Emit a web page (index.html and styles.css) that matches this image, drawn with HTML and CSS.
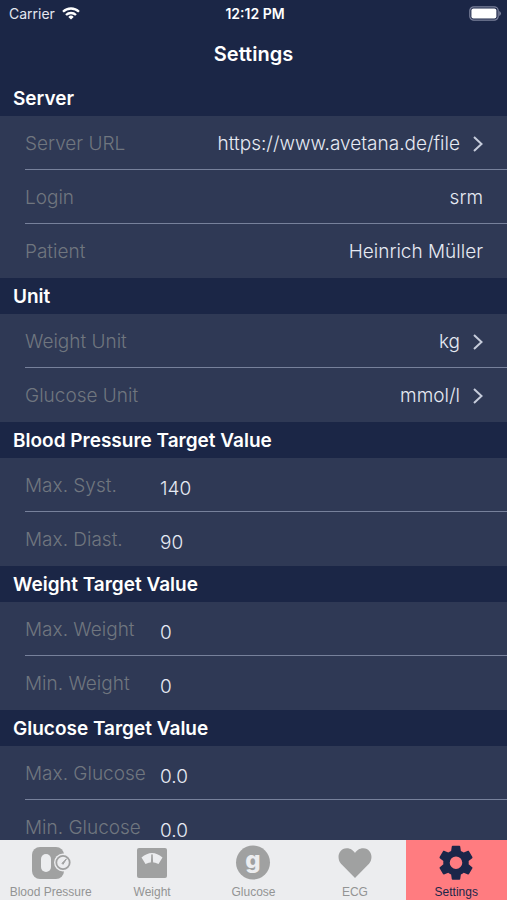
FILE: index.html
```html
<!DOCTYPE html>
<html lang="en">
<head>
<meta charset="utf-8">
<meta name="viewport" content="width=device-width, initial-scale=1">
<title>Settings</title>
<link rel="stylesheet" href="styles.css">
</head>
<body>
<div class="status">
  <div class="carrier">Carrier
    <svg width="18" height="13" viewBox="0 0 18 13" aria-hidden="true"><g fill="none" stroke="currentColor" stroke-width="2.3"><path d="M1 4.8a11.4 11.4 0 0 1 16 0"/><path d="M4 8a7.2 7.2 0 0 1 10 0"/></g><path d="M6.3 9.9a3.9 3.9 0 0 1 5.4 0L9 12.6z" fill="currentColor"/></svg>
  </div>
  <div class="clock">12:12 PM</div>
  <svg class="battery" width="32" height="15" viewBox="0 0 32 15" aria-hidden="true"><rect x=".8" y=".8" width="28.4" height="13.4" rx="4" fill="none" stroke="#7c829c" stroke-width="1.2"/><rect x="2.4" y="2.6" width="25" height="9.8" rx="2" fill="#fff"/><path d="M30.3 5v5q1.5-.8 1.5-2.5T30.3 5" fill="#8c92aa"/></svg>
</div>
<header class="title"><h1>Settings</h1></header>
<main>
  <section>
    <h2>Server</h2>
    <ul>
      <li><a class="row" href="#url"><span class="name">Server URL</span><span class="value">https://www.avetana.de/file</span><svg class="chevron" viewBox="0 0 10 16" aria-hidden="true"><path d="M1 1l7.5 7L1 15"/></svg></a></li>
      <li><div class="row"><span class="name">Login</span><span class="value">srm</span></div></li>
      <li><div class="row"><span class="name">Patient</span><span class="value">Heinrich Müller</span></div></li>
    </ul>
  </section>
  <section>
    <h2>Unit</h2>
    <ul>
      <li><a class="row" href="#weight-unit"><span class="name">Weight Unit</span><span class="value">kg</span><svg class="chevron" viewBox="0 0 10 16" aria-hidden="true"><path d="M1 1l7.5 7L1 15"/></svg></a></li>
      <li><a class="row" href="#glucose-unit"><span class="name">Glucose Unit</span><span class="value">mmol/l</span><svg class="chevron" viewBox="0 0 10 16" aria-hidden="true"><path d="M1 1l7.5 7L1 15"/></svg></a></li>
    </ul>
  </section>
  <section>
    <h2>Blood Pressure Target Value</h2>
    <ul>
      <li><div class="row field"><label for="syst">Max. Syst.</label><input id="syst" type="text" inputmode="numeric" value="140"></div></li>
      <li><div class="row field"><label for="diast">Max. Diast.</label><input id="diast" type="text" inputmode="numeric" value="90"></div></li>
    </ul>
  </section>
  <section>
    <h2>Weight Target Value</h2>
    <ul>
      <li><div class="row field"><label for="wmax">Max. Weight</label><input id="wmax" type="text" inputmode="decimal" value="0"></div></li>
      <li><div class="row field"><label for="wmin">Min. Weight</label><input id="wmin" type="text" inputmode="decimal" value="0"></div></li>
    </ul>
  </section>
  <section>
    <h2>Glucose Target Value</h2>
    <ul>
      <li><div class="row field"><label for="gmax">Max. Glucose</label><input id="gmax" type="text" inputmode="decimal" value="0.0"></div></li>
      <li><div class="row field"><label for="gmin">Min. Glucose</label><input id="gmin" type="text" inputmode="decimal" value="0.0"></div></li>
    </ul>
  </section>
</main>
<nav>
  <a href="#bp"><svg width="40" height="36" viewBox="0 0 40 36" aria-hidden="true"><rect x="1" y="2" width="32" height="32" rx="8" fill="#a0a1a1"/><rect x="10" y="9" width="10" height="18" rx="5" fill="#ecedef"/><circle cx="32" cy="17.5" r="9" fill="#ecedef"/><circle cx="32" cy="17.5" r="6.7" fill="none" stroke="#a0a1a1" stroke-width="1.8"/><path d="M31 18.300l4.500-4.500-3.500 5.500z" fill="#a0a1a1" stroke="#a0a1a1"/></svg><span>Blood Pressure</span></a>
  <a href="#weight"><svg width="36" height="36" viewBox="0 0 36 36" aria-hidden="true"><rect x="3" y="3" width="30" height="30" rx="2" fill="#a0a1a1"/><path d="M7.500 12.500Q18 3.500 28.500 12.500L24.500 19Q18 15.500 11.500 19z" fill="#ecedef"/><path d="M17.300 18L18 9.500l.7 8.500z" fill="#a0a1a1" stroke="#a0a1a1"/></svg><span>Weight</span></a>
  <a href="#glucose"><svg width="36" height="36" viewBox="0 0 36 36" aria-hidden="true"><circle cx="18" cy="17.500" r="17" fill="#a0a1a1"/><text class="g" x="18" y="23" text-anchor="middle" fill="#ecedef">g</text></svg><span>Glucose</span></a>
  <a href="#ecg"><svg width="36" height="36" viewBox="0 0 36 36" aria-hidden="true"><path d="M18 33L4 18.800C-.5 14 1 3.500 9.700 3.200c4.300 0 6.600 2.200 8.300 4.800 1.700-2.600 4-4.800 8.300-4.800C35 3.500 36.500 14 32 18.800z" fill="#a0a1a1"/></svg><span>ECG</span></a>
  <a class="active" href="#settings" aria-current="page"><svg width="36" height="36" viewBox="1.400 1.600 21.200 21.200" aria-hidden="true"><path fill="#1b2649" d="M19.430 12.980c.04-.32.07-.64.07-.98s-.03-.66-.07-.98l2.110-1.650c.19-.15.24-.42.120-.64l-2-3.460c-.12-.22-.39-.3-.61-.22l-2.490 1c-.52-.4-1.080-.73-1.690-.98l-.38-2.650C14.460 2.180 14.250 2 14 2h-4c-.25 0-.46.18-.49.420l-.38 2.650c-.61.25-1.170.59-1.690.98l-2.490-1c-.23-.09-.49 0-.61.220l-2 3.460c-.13.22-.07.49.12.640l2.110 1.650c-.04.32-.07.65-.07.980s.03.66.07.980l-2.110 1.650c-.19.15-.24.42-.12.640l2 3.460c.12.22.39.3.61.220l2.490-1c.52.4 1.080.73 1.690.980l.38 2.650c.03.24.24.420.49.420h4c.25 0 .46-.18.49-.42l.38-2.650c.61-.25 1.170-.59 1.690-.98l2.490 1c.23.09.49 0 .61-.22l2-3.460c.12-.22.07-.49-.12-.64l-2.110-1.650zM12 15.700a3.700 3.700 0 1 1 0-7.400 3.700 3.700 0 0 1 0 7.400z"/></svg><span>Settings</span></a>
</nav>
</body>
</html>
```

FILE: styles.css
```css
* { box-sizing: border-box; }

body {
  margin: 0;
  height: 100vh;
  display: flex;
  flex-direction: column;
  background: #1b2646;
  color: #fff;
  font-family: "Century Gothic", Inter, sans-serif;
  overflow: hidden;
}

.status {
  flex: none;
  height: 27px;
  padding: 0 6px 0 9px;
  display: grid;
  grid-template-columns: 1fr auto 1fr;
  align-items: center;
  font: 14px/20px Inter, sans-serif;
}

.carrier {
  display: flex;
  align-items: center;
  gap: 7px;
  color: #e4e7f0;
}

.carrier svg { color: #fff; }
.clock { font-weight: 600; }
.battery { justify-self: end; }

.title {
  flex: none;
  height: 53px;
  display: flex;
  align-items: center;
  justify-content: center;
}

h1 {
  margin: 0;
  font-size: 20px;
  line-height: 28px;
  font-weight: 600;
}

main {
  flex: 1;
  min-height: 0;
  overflow-y: auto;
  scrollbar-width: none;
}

h2 {
  margin: 0;
  padding: 2px 0 0 13px;
  font-size: 19px;
  line-height: 34px;
  font-weight: 600;
}

ul {
  margin: 0;
  padding: 0 0 0 25px;
  list-style: none;
  background: #2f3955;
}

li {
  height: 54px;
  border-bottom: 1px solid #77819b;
}

li:last-child { border-bottom: 0; }

.row {
  display: flex;
  align-items: center;
  height: 53px;
  padding: 2px 24px 0 0;
  color: #e6eaf3;
  font-size: 19px;
  font-weight: 300;
  line-height: 24px;
  text-decoration: none;
}

.name, label { color: #70767f; }
.value { margin-left: auto; }

.chevron {
  width: 10px;
  height: 16px;
  margin-left: 13px;
  fill: none;
  stroke: #c6ccdb;
  stroke-width: 2;
}

label { flex: 0 0 135px; }

.field input {
  flex: 1;
  min-width: 0;
  height: 32px;
  padding: 5px 0 0;
  border: 0;
  background: none;
  color: inherit;
  font: inherit;
}

nav {
  flex: none;
  height: 60px;
  display: grid;
  grid-template-columns: repeat(5, 1fr);
  background: #ecedef;
}

nav a {
  display: flex;
  flex-direction: column;
  align-items: center;
  gap: 2px;
  padding-top: 5px;
  color: #939494;
  font: 12px/18px "Liberation Sans", sans-serif;
  text-decoration: none;
}

nav .active {
  background: #ff7c80;
  color: #1b2649;
}

.g { font: 800 24px Inter, sans-serif; }
```
